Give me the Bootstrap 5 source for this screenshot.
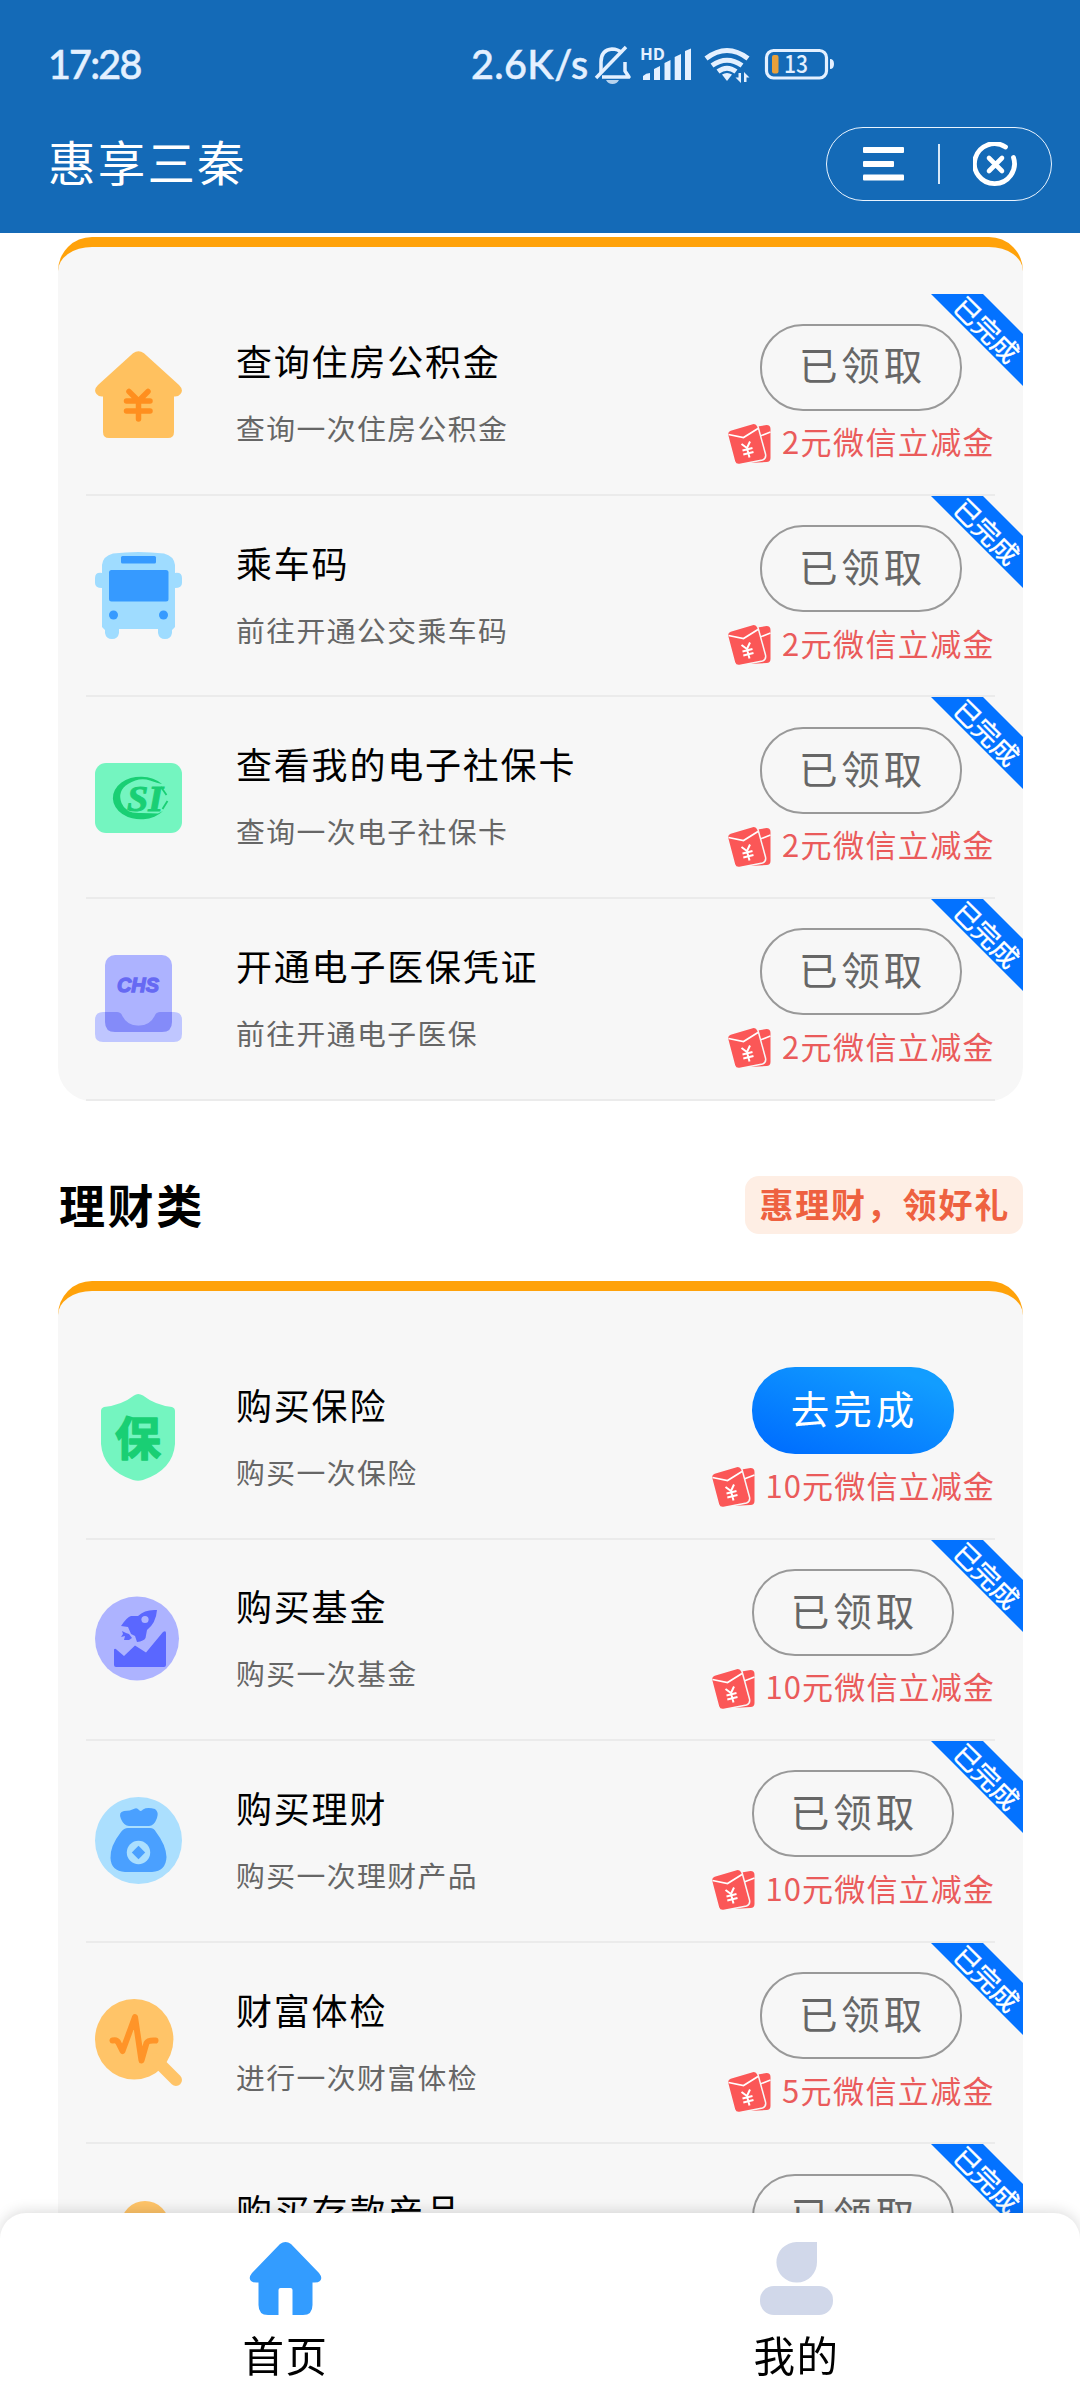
<!DOCTYPE html>
<html lang="zh-CN">
<head>
<meta charset="utf-8">
<meta name="viewport" content="width=device-width, initial-scale=1">
<title>惠享三秦</title>
<link href="https://cdn.jsdelivr.net/npm/bootstrap@5.3.0/dist/css/bootstrap.min.css" rel="stylesheet">
<style>
  body { font-family: "Noto Sans CJK SC", "Noto Sans", sans-serif; color: #000; background: #fff; height: 2400px; overflow: hidden; }
  svg { display: block; flex: none; }
  svg text { font-family: "Noto Sans CJK SC", sans-serif; }
  .app-head { height: 233px; background: #146ab7; color: #fff; }
  .status { height: 80px; padding: 39px 0 0 48px; color: #e4f0ff; }
  .status-txt { font-size: 39.5px; line-height: 50px; font-family: Lato, "Noto Sans", sans-serif; font-weight: 500; white-space: nowrap; -webkit-text-stroke: .5px #e4f0ff; letter-spacing: .4px; }
  .status-clock { width: 423px; letter-spacing: -1.8px; }
  .status-rate { width: 121px; }
  .status-icons { margin-top: -3px; overflow: visible; }
  .title-row { padding: 47px 28px 0 48px; }
  .app-title { font-size: 47.500px; letter-spacing: 2.2px; line-height: 68px; margin-top: -6px; }
  .capsule { width: 226px; height: 74px; border: 1.5px solid #e9f4ff; border-radius: 37px; padding-left: 36px; }
  .capsule-sep { width: 1.5px; height: 40px; background: #d7e8f8; margin: 0 33px 0 34px; }
  .page-body { padding: 4px 57px 0 58px; }
  .task-card { background: #f7f7f7; border-top: 10px solid #ffa20a; border-radius: 34px; padding: 47.300px 28px 0; }
  .task-row { height: 201.6px; border-bottom: 2px solid #ebebeb; padding-left: 9px; }
  .task-name { font-size: 36px; letter-spacing: 1.8px; line-height: 40px; }
  .task-desc { font-size: 28.8px; letter-spacing: 1.45px; line-height: 40px; color: #666; margin-top: 28px; }
  .task-text { margin-left: 54px; white-space: nowrap; }
  .pill-btn { width: 202px; height: 87px; border-radius: 43px; border: 2px solid #999; background: transparent; color: #666; font-size: 38.500px; letter-spacing: 3.9px; line-height: 1; padding: 0 0 7px 3px; }
  .pill-go { border: 0; color: #fff; background: linear-gradient(20deg, #0070ff 10%, #129dff 85%); }
  .prize { color: #ea5b5b; font-size: 31px; letter-spacing: 1.4px; line-height: 42px; margin-top: 12px; gap: 11px; white-space: nowrap; }
  .prize span { margin-top: -2.5px; height: 42px; }
  .prize-ten { gap: 10.500px; }
  .prize-ten span { letter-spacing: 1.15px; }
  .ribbon { top: 0; right: -28px; }
  .sect-title { font-size: 46px; letter-spacing: 2.6px; line-height: 60px; font-weight: 700; margin: -4px 0 0 1px; }
  .sect-row { padding: 75px 0 47px; }
  .sect-tag { height: 58px; border-radius: 14px; background: #feeee4; color: #ee6140; font-size: 34px; letter-spacing: 1.8px; font-weight: 700; padding: 0 13px 0 14px; line-height: 55px; }
  .tabs { height: 187px; background: #fff; border-radius: 26px 26px 0 0; box-shadow: 0 -2px 14px rgba(0,0,0,.14); padding: 29px 28px 0 30px; }
  .tab-label { font-size: 41.500px; letter-spacing: 1.5px; line-height: 50px; margin-top: 14px; }
</style>
</head>
<body>

<svg class="d-none">
  <symbol id="gift" viewBox="0 0 43 42">
    <path d="M27 4L39 2Q43 2 43 6V35Q43 39 39 39L20 40Z" fill="#fb5757"/>
    <path d="M30 14L43 9" stroke="#fff" stroke-width="1.6"/>
    <path d="M3 7L25 .5Q29-.5 30.500 3.500L38 31Q39 35.500 35 37L12 41.500Q8 42 7 38.500L0 12Q-.5 8 3 7Z" fill="#fb5757" stroke="#f7f7f7" stroke-width="1.500"/>
    <path d="M1 11.500L16 14.500 30.500 5.500" fill="none" stroke="#fff" stroke-width="1.700"/>
    <path d="M14 21L19.500 25 22.500 18.500M15 27.500L25 25M15.800 31.500L26 29M19.500 25L22 34.500" fill="none" stroke="#fff" stroke-width="2"/>
  </symbol>
  <symbol id="done" viewBox="0 0 92 92">
    <path d="M0 0H52L92 40V92Z" fill="#0372ff"/>
    <text transform="translate(56 35.500) rotate(45)" x="0" y="10.500" text-anchor="middle" font-size="26.500" fill="#fff" stroke="#fff" stroke-width=".4">已完成</text>
  </symbol>
</svg>

<header class="app-head">
  <div class="status d-flex align-items-start">
    <span class="status-txt status-clock">17:28</span>
    <span class="status-txt status-rate">2.6K/s</span>
    <svg class="status-icons" width="245" height="50" viewBox="592 36 245 50" fill="none" stroke="#e4f0ff">
      <path d="M601 73V62Q601 50 612 49Q618 49 622 53M625 62V71L629 77H602" stroke-width="3.500" stroke-linejoin="round"/>
      <path d="M596 78L626 47" stroke-width="3.500"/>
      <path d="M606 80H619Q617 84 612.500 84T606 80Z" fill="#b8d3ee" stroke="none"/>
      <text x="640" y="60" font-size="16" font-weight="700" fill="#e4f0ff" stroke="none" textLength="25" lengthAdjust="spacingAndGlyphs">HD</text>
      <g fill="#e4f0ff" stroke="none">
        <path d="M643 80V76Q646 73 650 73V80ZM654 80V69L660 66V80ZM664.500 80V63L670.500 60V80ZM674.700 80V57L681 54V80ZM685 80V51L691 48.500V80Z"/>
        <path d="M722 74.500Q727 71.500 732 74.500L727 81Z"/>
        <path d="M741 73V83L735.500 77.500H738.500V73ZM744 82V72L749.500 77.500H746.500V82Z"/>
      </g>
      <path d="M706 58.500Q727 42.500 748 58.500M712 65.500Q727 55 742 65.500M718 71.500Q727 65 736 71.500" stroke-width="5"/>
      <rect x="766.500" y="50.500" width="60" height="27.500" rx="7" stroke-width="3.200"/>
      <rect x="772" y="55" width="6.500" height="18.500" rx="2" fill="#e9a03a" stroke="none"/>
      <path d="M830 59Q834 59 834 64T830 69Z" fill="#e4f0ff" stroke="none"/>
      <text x="796" y="73" text-anchor="middle" font-size="24" fill="#e4f0ff" stroke="none" textLength="24" lengthAdjust="spacingAndGlyphs" style="font-weight:500">13</text>
    </svg>
  </div>
  <div class="title-row d-flex justify-content-between align-items-center">
    <div class="app-title">惠享三秦</div>
    <div class="capsule d-flex align-items-center">
      <svg width="41" height="34" viewBox="0 0 41 34" fill="#fff"><rect y="0" width="41" height="6" rx="1"/><rect y="14" width="31" height="6" rx="1"/><rect y="27.500" width="41" height="6" rx="1"/></svg>
      <span class="capsule-sep"></span>
      <svg width="45" height="45" viewBox="0 0 45 45" fill="none" stroke="#fff" stroke-width="4.800" stroke-linecap="round"><path d="M32.500 5A20 20 0 1 0 40.500 15.500"/><path d="M16 16L29 29M29 16L16 29" stroke-width="4.600"/></svg>
    </div>
  </div>
</header>

<main class="page-body">
  <section class="task-card">
    <div class="task-row position-relative d-flex align-items-center">
      <svg width="87" height="87" viewBox="0 0 87 87"><path d="M38 2.300Q43.500-2 49 2.300L84 34Q89 39 85.500 43Q83 46 79 45.500V81Q79 87 73 87H14Q8 87 8 81V45.500Q4 46 1.500 43Q-2 39 3 34Z" fill="#ffc15f"/><path d="M34 40.500L43.500 50 53 40.500M43.500 50V68M31.500 50H55M31.500 60H55" fill="none" stroke="#ff8f1f" stroke-width="5.500" stroke-linecap="round"/></svg>
      <div class="task-text flex-grow-1"><div class="task-name">查询住房公积金</div><div class="task-desc">查询一次住房公积金</div></div>
      <div class="d-flex flex-column align-items-center"><button class="pill-btn">已领取</button><div class="prize d-flex"><svg width="44" height="42"><use href="#gift"/></svg><span>2元微信立减金</span></div></div>
      <svg class="ribbon position-absolute" width="92" height="92"><use href="#done"/></svg>
    </div>
    <div class="task-row position-relative d-flex align-items-center">
      <svg width="87" height="87" viewBox="0 0 87 87"><path d="M18 1.500Q43 -1.500 69 1.500Q79 4 80 13V21Q87 20 87 26V31Q87 36 80 36V75L77 78V81Q76 87 70 87T63 81V77H24V81Q23 87 17 87T10 81V78L7 75V36Q0 36 0 31V26Q0 20 7 21V13Q8 4 18 1.500Z" fill="#9fdcff"/><g fill="#369aff"><rect x="26" y="4" width="35" height="7.500" rx="1.500"/><rect x="14" y="18" width="59.500" height="31.500" rx="2.500"/><circle cx="18.500" cy="63" r="4.500"/><circle cx="68.500" cy="63" r="4.500"/></g></svg>
      <div class="task-text flex-grow-1"><div class="task-name">乘车码</div><div class="task-desc">前往开通公交乘车码</div></div>
      <div class="d-flex flex-column align-items-center"><button class="pill-btn">已领取</button><div class="prize d-flex"><svg width="44" height="42"><use href="#gift"/></svg><span>2元微信立减金</span></div></div>
      <svg class="ribbon position-absolute" width="92" height="92"><use href="#done"/></svg>
    </div>
    <div class="task-row position-relative d-flex align-items-center">
      <svg width="87" height="87" viewBox="0 0 87 87"><rect y="9" width="87" height="70" rx="11" fill="#74f5c0"/><path d="M67 30A28 21.300 0 1 0 68 57L63 59.500Q56 59 46 59Q31 60 26.500 49Q22 37 33 30Q44 23 55 26.500Q63 29 67 30Z" fill="#19cf74"/><text x="32" y="57" font-size="36" font-weight="700" font-style="italic" fill="#19cf74" stroke="#19cf74" stroke-width="1" textLength="36" lengthAdjust="spacingAndGlyphs" style="font-family:'Liberation Serif',serif">SI</text><path d="M66 33L71.500 41M67.500 55L72.500 47" stroke="#19cf74" stroke-width="1.800"/></svg>
      <div class="task-text flex-grow-1"><div class="task-name">查看我的电子社保卡</div><div class="task-desc">查询一次电子社保卡</div></div>
      <div class="d-flex flex-column align-items-center"><button class="pill-btn">已领取</button><div class="prize d-flex"><svg width="44" height="42"><use href="#gift"/></svg><span>2元微信立减金</span></div></div>
      <svg class="ribbon position-absolute" width="92" height="92"><use href="#done"/></svg>
    </div>
    <div class="task-row position-relative d-flex align-items-center">
      <svg width="87" height="87" viewBox="0 0 87 87"><rect x="10" width="67" height="77" rx="10" fill="#adb3ff"/><path d="M8 57H22Q26 57 27.500 61Q32 70.500 43.500 70.500T59.500 61Q61 57 65 57H79Q87 57 87 65V79Q87 87 79 87H8Q0 87 0 79V65Q0 57 8 57Z" fill="#bfc6ff"/><path d="M10 57H22Q26 57 27.500 61Q32 70.500 43.500 70.500T59.500 61Q61 57 65 57H77V67Q77 77 67 77H20Q10 77 10 67Z" fill="#848bf9"/><text x="22" y="36.500" font-size="20.500" font-weight="700" font-style="italic" fill="#6669f3" stroke="#6669f3" stroke-width="1.300" textLength="42" lengthAdjust="spacingAndGlyphs" style="font-family:'Liberation Sans',sans-serif">CHS</text></svg>
      <div class="task-text flex-grow-1"><div class="task-name">开通电子医保凭证</div><div class="task-desc">前往开通电子医保</div></div>
      <div class="d-flex flex-column align-items-center"><button class="pill-btn">已领取</button><div class="prize d-flex"><svg width="44" height="42"><use href="#gift"/></svg><span>2元微信立减金</span></div></div>
      <svg class="ribbon position-absolute" width="92" height="92"><use href="#done"/></svg>
    </div>
  </section>

  <div class="sect-row d-flex justify-content-between align-items-center">
    <div class="sect-title">理财类</div>
    <div class="sect-tag">惠理财，领好礼</div>
  </div>

  <section class="task-card">
    <div class="task-row position-relative d-flex align-items-center">
      <svg width="87" height="87" viewBox="0 0 87 87"><path d="M39 1.500Q43-1.500 48 1.500Q60 11 77 13Q80 14 80 17V50Q78 76 48 86Q43 87.500 38 86Q8 76 6 50V17Q6 14 9 13Q27 11 39 1.500Z" fill="#74f5c0"/><text x="43" y="60.500" text-anchor="middle" font-size="46" font-weight="700" fill="#19cf74" stroke="#19cf74" stroke-width="1.400" stroke-linejoin="round">保</text></svg>
      <div class="task-text flex-grow-1"><div class="task-name">购买保险</div><div class="task-desc">购买一次保险</div></div>
      <div class="d-flex flex-column align-items-center"><button class="pill-btn pill-go">去完成</button><div class="prize prize-ten d-flex"><svg width="44" height="42"><use href="#gift"/></svg><span>10元微信立减金</span></div></div>
    </div>
    <div class="task-row position-relative d-flex align-items-center">
      <svg width="87" height="87" viewBox="0 0 87 87"><circle cx="42" cy="42.500" r="42" fill="#adb3ff"/><g fill="#5a67ff"><path d="M19 53.500Q20 52 22 54L29 60 40 49.500 51 56.500 68 36Q71 34 71 37V69Q71 71 69 71H21Q19 71 19 69Z"/><path d="M62 14Q50 13 43 20H36Q32 21 26 30L33 31 36 38 40 40 42 46Q49 45 50.500 42L52 34Q61 27 62 14Z"/><path d="M27 35L31 37 34 38 37 42 34 44 29 44 30 40 26 41 28 38Z"/></g><circle cx="50" cy="23.500" r="3.600" fill="#adb3ff"/></svg>
      <div class="task-text flex-grow-1"><div class="task-name">购买基金</div><div class="task-desc">购买一次基金</div></div>
      <div class="d-flex flex-column align-items-center"><button class="pill-btn">已领取</button><div class="prize prize-ten d-flex"><svg width="44" height="42"><use href="#gift"/></svg><span>10元微信立减金</span></div></div>
      <svg class="ribbon position-absolute" width="92" height="92"><use href="#done"/></svg>
    </div>
    <div class="task-row position-relative d-flex align-items-center">
      <svg width="87" height="87" viewBox="0 0 87 87"><circle cx="43.500" cy="43.500" r="43.500" fill="#abdffe"/><path d="M29 14Q35 14 40 11.500Q42 10.500 44 13Q46 15 48 12.500Q52 10 60 12Q64 15 62 21Q59 29 54 29H34Q29 29 26 22Q23 15 29 14ZM33 31H55Q59 31 61 35Q71 48 71.500 60Q71 74 57 75H30Q16 74 15.500 61Q15 49 26 35Q29 31 33 31Z" fill="#4aa0ff"/><circle cx="43.500" cy="55.500" r="11.700" fill="#abdffe"/><path d="M43.500 48.800L50.200 55.500 43.500 62.200 36.800 55.500Z" fill="#4aa0ff"/></svg>
      <div class="task-text flex-grow-1"><div class="task-name">购买理财</div><div class="task-desc">购买一次理财产品</div></div>
      <div class="d-flex flex-column align-items-center"><button class="pill-btn">已领取</button><div class="prize prize-ten d-flex"><svg width="44" height="42"><use href="#gift"/></svg><span>10元微信立减金</span></div></div>
      <svg class="ribbon position-absolute" width="92" height="92"><use href="#done"/></svg>
    </div>
    <div class="task-row position-relative d-flex align-items-center">
      <svg width="87" height="87" viewBox="0 0 87 87"><ellipse cx="39.200" cy="40.300" rx="39.200" ry="40.300" fill="#ffc468"/><path d="M60 60L81 81" stroke="#ffc468" stroke-width="12" stroke-linecap="round"/><path d="M17.500 41.500Q22 40.500 23.500 44L27.500 52 40 18 46.500 61.500 51.500 44Q53 41 60.500 41.500" fill="none" stroke="#ff9428" stroke-width="6" stroke-linecap="round" stroke-linejoin="round"/></svg>
      <div class="task-text flex-grow-1"><div class="task-name">财富体检</div><div class="task-desc">进行一次财富体检</div></div>
      <div class="d-flex flex-column align-items-center"><button class="pill-btn">已领取</button><div class="prize d-flex"><svg width="44" height="42"><use href="#gift"/></svg><span>5元微信立减金</span></div></div>
      <svg class="ribbon position-absolute" width="92" height="92"><use href="#done"/></svg>
    </div>
    <div class="task-row position-relative d-flex align-items-center">
      <svg width="87" height="87" viewBox="0 0 87 87"><circle cx="50" cy="24" r="24" fill="#ffc468"/></svg>
      <div class="task-text flex-grow-1"><div class="task-name">购买存款产品</div><div class="task-desc">购买一次存款产品</div></div>
      <div class="d-flex flex-column align-items-center"><button class="pill-btn">已领取</button><div class="prize prize-ten d-flex"><svg width="44" height="42"><use href="#gift"/></svg><span>10元微信立减金</span></div></div>
      <svg class="ribbon position-absolute" width="92" height="92"><use href="#done"/></svg>
    </div>
  </section>
</main>

<nav class="tabs fixed-bottom d-flex">
  <div class="flex-fill w-50 d-flex flex-column align-items-center">
    <svg width="73" height="73" viewBox="0 0 73 73"><path d="M31 2Q36.500-2 42 2L70 31Q74 36 71 39Q69 41 63.500 40.500V63Q63.500 73 54 73H43.500V48Q43.500 46 41.500 46H31.500Q29.500 46 29.500 48V73H19Q9.500 73 9.500 63V40.500Q4 41 2 39Q-1 36 3 31Z" fill="#339cff"/></svg>
    <div class="tab-label">首页</div>
  </div>
  <div class="flex-fill w-50 d-flex flex-column align-items-center">
    <svg width="73" height="73" viewBox="0 0 73 73" fill="#d1d8ea"><path d="M36.500 0H57V20A20.300 20.300 0 1 1 36.500 0Z"/><rect y="44" width="73" height="29" rx="14"/></svg>
    <div class="tab-label">我的</div>
  </div>
</nav>

<script src="https://cdn.jsdelivr.net/npm/bootstrap@5.3.0/dist/js/bootstrap.bundle.min.js"></script>
</body>
</html>
